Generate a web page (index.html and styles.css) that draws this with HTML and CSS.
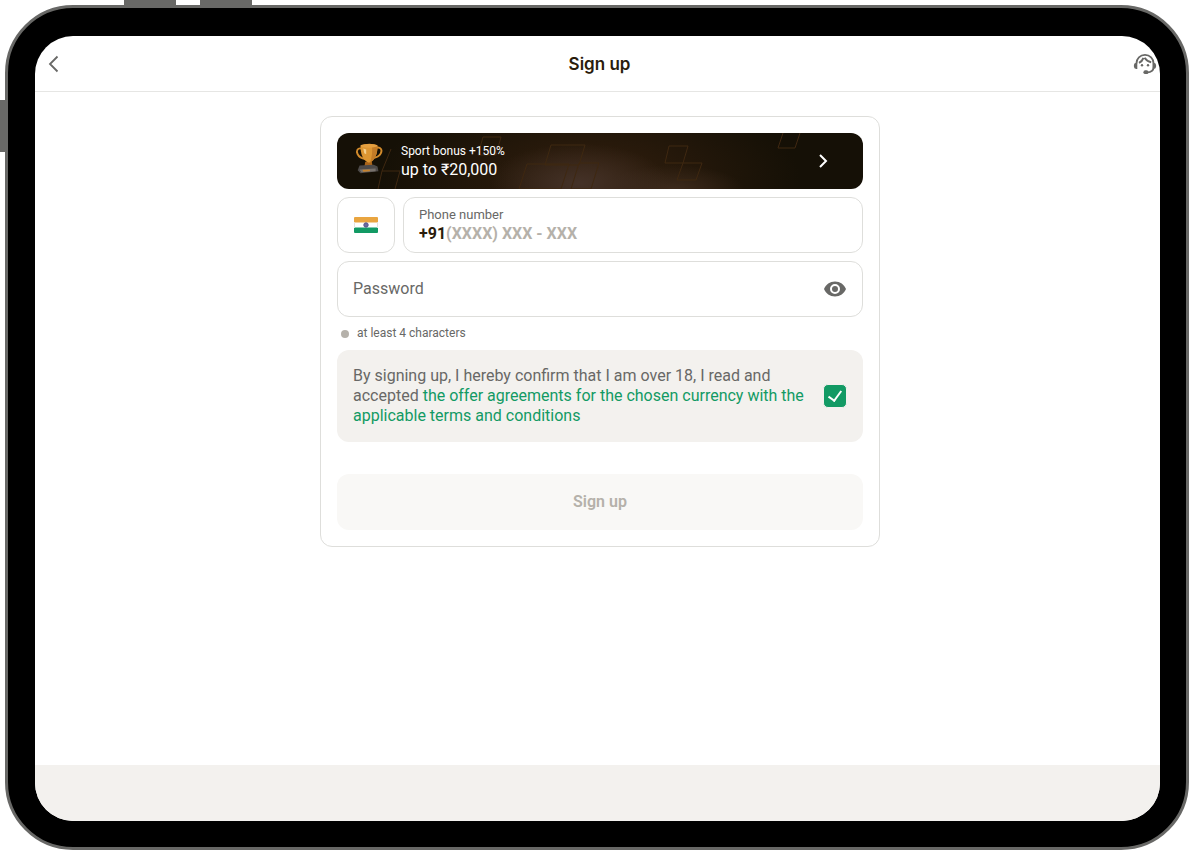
FILE: index.html
```
<!DOCTYPE html>
<html lang="en">
<head>
  <meta charset="UTF-8">
  <meta name="viewport" content="width=device-width, initial-scale=1.0">
  <title>Sign up</title>
  <link rel="stylesheet" href="styles.css">
</head>
<body>

  <!-- Tablet frame -->
  <div class="device">
    <span class="device-key key-volume-up"></span>
    <span class="device-key key-volume-down"></span>
    <span class="device-key key-power"></span>

    <div class="screen">

      <!-- Header Section -->
      <header class="top-bar">
        <a href="#back" class="icon-link" aria-label="Back">
          <svg width="24" height="24" viewBox="0 0 24 24" fill="none" stroke="#686866" stroke-width="1.8">
            <path d="M15.500 4.500L8 12l7.500 7.500"/>
          </svg>
        </a>
        <h1 class="page-title">Sign up</h1>
        <a href="#support" class="icon-link" aria-label="Support">
          <svg width="24" height="24" viewBox="0 0 24 24">
            <g fill="none" stroke="#686866" stroke-width="1.800">
              <path d="M3.400 11.500C3.400 6.500 7.200 2.900 12 2.900s8.600 3.600 8.600 8.600v3.500c0 3.600-2.400 5.300-6.600 5.500"/>
              <path d="M6 10.800c2-1 3.600-2.600 4.500-5M11.500 5.800c1.600 2.400 3.700 3.900 6.700 4.500" stroke-width="2"/>
            </g>
            <g fill="#686866">
              <path d="M4.300 10.800v6.200H3.200A2.400 2.400 0 0 1 .900 14.600v-1.300a2.400 2.400 0 0 1 2.300-2.500z"/>
              <path d="M19.700 10.800v6.200h1.100a2.400 2.400 0 0 0 2.300-2.400v-1.300a2.400 2.400 0 0 0-2.300-2.500z"/>
              <circle cx="9" cy="13.200" r="1.200"/>
              <circle cx="15" cy="13.200" r="1.200"/>
              <rect x="10.400" y="18.300" width="5" height="3.800" rx="1.900"/>
            </g>
          </svg>
        </a>
      </header>

      <!-- Main Content Section -->
      <main class="content">
        <form class="signup-card">

          <!-- Bonus banner -->
          <a href="#bonus" class="bonus">
            <svg class="bonus-pattern" viewBox="0 0 526 56" preserveAspectRatio="none" fill="none" stroke="#3f2811" aria-hidden="true">
              <path d="M54 16l-9 22h18l-5 18M45 38l-4 18M146 4h18l-5 18h-18zM214 12h34l-6 20h-34zM190 31h42l-8 25h-42zM242 30h20l-8 26h-20z"/>
              <path d="M332 13h19l-5 17h-18zM346 30h19l-6 17h-19zM446 0l-5 15h17l5-15"/>
            </svg>
            <svg class="trophy" width="32" height="34" viewBox="0 0 32 36" aria-hidden="true">
              <g fill="none" stroke="#d38b2b" stroke-width="2">
                <path d="M8 7C4 6 2 9 4 13c1.500 3 4 4.500 8 5"/>
                <path d="M24 6c4-1 6.500 2 4.500 6-1.500 3-4.500 4.500-8.500 5"/>
              </g>
              <path d="M12 21l7 0 1 6h-9z" fill="#a9641a"/>
              <path d="M7 4c5-3 14-3 18 0 0 8-2 15-9 18-7-2-9-10-9-18z" fill="#dd9632"/>
              <path d="M19 3l6 1c0 8-2 15-8 18 2-5 3-12 2-19z" fill="#c47c27"/>
              <ellipse cx="16" cy="4" rx="9" ry="2" fill="#e5a040"/>
              <path d="M10 7l3 1v5l-2-1z" fill="#f5cf8b"/>
              <path d="M6 25l15-1 4 2 1 5-19 2-3-3z" fill="#4d4a49"/>
              <path d="M6 29l17-1v3l-15 1z" fill="#77716c"/>
              <path d="M9 29.500l8-.5v2l-7 .5z" fill="#c5822e"/>
            </svg>
            <span class="bonus-text">
              <span class="bonus-label">Sport bonus +150%</span>
              <span class="bonus-amount">up to ₹20,000</span>
            </span>
            <svg width="24" height="24" viewBox="0 0 24 24" fill="none" stroke="#fff" stroke-width="2" aria-hidden="true">
              <path d="M9 6l6 6-6 6"/>
            </svg>
          </a>

          <!-- Phone -->
          <div class="phone-row">
            <button type="button" class="country" aria-label="Country: India">
              <svg width="24" height="16" viewBox="0 0 24 16">
                <rect width="24" height="16" rx="1" fill="#fff"/>
                <path d="M1 0h22a1 1 0 0 1 1 1v4.500H0V1a1 1 0 0 1 1-1z" fill="#e9a540"/>
                <path d="M0 10.500h24V15a1 1 0 0 1-1 1H1a1 1 0 0 1-1-1z" fill="#129a64"/>
                <path d="M.5 5v6M23.500 5v6" stroke="#e3e3e0"/>
                <circle cx="12" cy="8" r="2.200" fill="#6a6a9c" stroke="#54548c"/>
              </svg>
            </button>
            <div class="field phone-field">
              <label class="field-label" for="phone">Phone number</label>
              <div class="phone-line">
                <span class="dial-code">+91</span>
                <input class="phone-input" id="phone" type="tel" placeholder="(XXXX) XXX - XXX">
              </div>
            </div>
          </div>

          <!-- Password -->
          <div class="field password-field">
            <input class="password-input" id="password" type="password" placeholder="Password" aria-label="Password">
            <button type="button" class="eye-button" aria-label="Show password">
              <svg width="24" height="24" viewBox="0 0 24 24" fill="#686866">
                <path fill-rule="evenodd" d="M12 4.500C7 4.500 2.700 7.600 1 12c1.700 4.400 6 7.500 11 7.500s9.300-3.100 11-7.500c-1.700-4.400-6-7.500-11-7.500zM12 17a5 5 0 1 1 0-10 5 5 0 0 1 0 10zm0-8a3 3 0 1 0 0 6 3 3 0 0 0 0-6z"/>
              </svg>
            </button>
          </div>
          <p class="hint">at least 4 characters</p>

          <!-- Agreement -->
          <div class="terms">
            <label class="terms-text" for="agree">By signing up, I hereby confirm that I am over 18, I read and accepted <a href="#terms">the offer agreements for the chosen currency with the applicable terms and conditions</a></label>
            <input class="terms-check" id="agree" type="checkbox" checked>
          </div>

          <button type="submit" class="submit-button" disabled>Sign up</button>
        </form>
      </main>

      <!-- Footer Section -->
      <footer class="bottom-bar"></footer>
    </div>
  </div>

</body>
</html>
```
FILE: styles.css
```
/* General styles */
* {
  box-sizing: border-box;
}

body {
  margin: 0;
  padding: 5px 0 0 5px;
  min-height: 100vh;
  display: flex;
  background: #fff;
  color: #686866;
  font-family: Roboto, sans-serif;
  font-size: 16px;
  line-height: 20px;
}

input,
button {
  font: inherit;
  color: inherit;
}

input {
  min-width: 0;
  padding: 0;
  border: none;
  outline: none;
  background: none;
}

button {
  padding: 0;
  border: none;
  background: none;
  cursor: pointer;
}

svg {
  display: block;
  flex: none;
}

/* Tablet frame */
.device {
  flex: 1;
  display: flex;
  position: relative;
  padding: 28px 26px 26px 27px;
  border: 3px solid #686866;
  border-radius: 68px;
  background: #000;
}

.device-key {
  position: absolute;
  background: #686866;
}

.key-volume-up,
.key-volume-down {
  top: -8px;
  width: 52px;
  height: 5px;
}

.key-volume-up {
  left: 116px;
}

.key-volume-down {
  left: 192px;
}

.key-power {
  top: 92px;
  left: -8px;
  width: 5px;
  height: 52px;
}

.screen {
  flex: 1;
  display: flex;
  flex-direction: column;
  overflow: hidden;
  border-radius: 38px;
  background: #fff;
}

/* Header */
.top-bar {
  display: flex;
  align-items: center;
  justify-content: space-between;
  height: 56px;
  padding: 0 3px 0 7px;
  border-bottom: 1px solid #e6e6e4;
}

.page-title {
  margin: 0;
  font-family: Inter, sans-serif;
  font-size: 17px;
  font-weight: 600;
  color: #2a1c0c;
}

/* Main */
.content {
  flex: 1;
  padding: 24px 0 24px 5px;
}

.signup-card {
  display: flex;
  flex-direction: column;
  max-width: 560px;
  margin: 0 auto;
  padding: 16px;
  border: 1px solid #dededb;
  border-radius: 12px;
}

/* Bonus banner */
.bonus {
  display: flex;
  align-items: center;
  position: relative;
  min-height: 56px;
  padding: 0 28px 0 16px;
  overflow: hidden;
  border-radius: 12px;
  background:
    radial-gradient(ellipse 90px 40px at 46% 90%, #443228, transparent),
    radial-gradient(ellipse 70px 24px at 64% 100%, #3c2a1c, transparent),
    radial-gradient(ellipse 210px 90px at 48% 80%, #331f0e, transparent),
    #151006;
  color: #fff;
  text-decoration: none;
}

.bonus-pattern {
  position: absolute;
  inset: 0;
  width: 100%;
  height: 100%;
}

.trophy {
  position: relative;
  margin-bottom: 4px;
}

.bonus-text {
  flex: 1;
  display: flex;
  flex-direction: column;
  position: relative;
  padding-left: 16px;
}

.bonus-label {
  font-size: 12px;
  line-height: 18px;
}

/* Fields */
.phone-row {
  display: flex;
  gap: 8px;
  margin: 8px 0;
}

.country,
.field {
  min-height: 56px;
  border: 1px solid #dededb;
  border-radius: 12px;
}

.country {
  display: flex;
  align-items: center;
  justify-content: center;
  width: 58px;
}

.phone-field {
  flex: 1;
  display: flex;
  flex-direction: column;
  justify-content: center;
  padding: 0 15px;
}

.field-label {
  font-size: 13px;
  line-height: 18px;
}

.phone-line {
  display: flex;
  font-weight: 700;
}

.dial-code {
  color: #2a1c0c;
}

.phone-input {
  flex: 1;
}

.phone-input::placeholder {
  color: #b5b1aa;
  opacity: 1;
}

.password-field {
  display: flex;
  align-items: center;
  padding: 0 15px;
}

.password-input {
  flex: 1;
}

.password-input::placeholder {
  color: #686866;
  opacity: 1;
}

.hint {
  display: flex;
  align-items: center;
  gap: 8px;
  margin: 8px 0;
  padding-left: 4px;
  font-size: 12px;
  line-height: 17px;
}

.hint::before {
  content: "";
  width: 8px;
  height: 8px;
  border-radius: 50%;
  background: #b5b1aa;
}

/* Agreement */
.terms {
  display: flex;
  align-items: center;
  gap: 16px;
  min-height: 92px;
  padding: 12px 16px;
  border-radius: 12px;
  background: #f3f1ee;
}

.terms-text {
  flex: 1;
}

.terms-text a {
  color: #129a64;
  text-decoration: none;
}

.terms-check {
  appearance: none;
  display: grid;
  place-items: center;
  width: 24px;
  height: 24px;
  margin: 0;
  border: 1px solid #f3f1ee;
  border-radius: 5px;
  background: #fff;
}

.terms-check:checked {
  background: #129a64;
}

.terms-check:checked::after {
  content: "";
  width: 6px;
  height: 11px;
  margin-bottom: 3px;
  border: solid #fff;
  border-width: 0 2px 2px 0;
  transform: rotate(36deg);
}

.submit-button {
  min-height: 56px;
  margin-top: 32px;
  border-radius: 12px;
  background: #f9f8f6;
  color: #b5b1aa;
  font-weight: 600;
}

/* Footer */
.bottom-bar {
  height: 56px;
  background: #f3f1ee;
}
```
